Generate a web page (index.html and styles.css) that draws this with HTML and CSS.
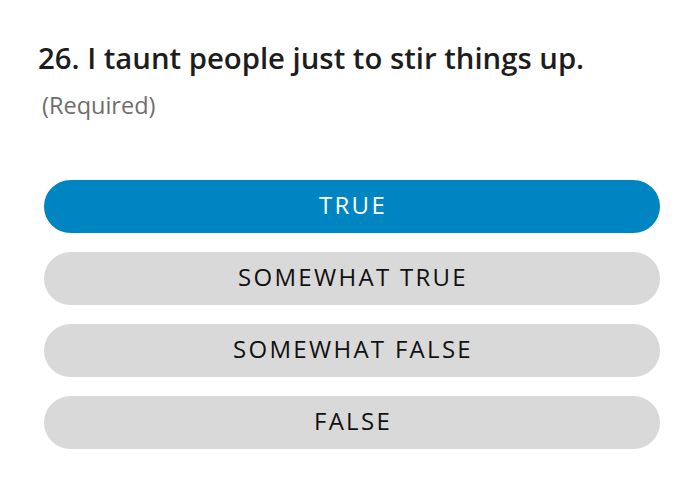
FILE: index.html
```html
<!DOCTYPE html>
<html>
<head>
<meta charset="utf-8">
<link rel="stylesheet" href="styles.css">
</head>
<body>
<div class="question">
  <h1 class="title">26. I taunt people just to stir things up.</h1>
  <div class="required">(Required)</div>
  <div class="options">
    <div class="option selected">TRUE</div>
    <div class="option">SOMEWHAT TRUE</div>
    <div class="option">SOMEWHAT FALSE</div>
    <div class="option">FALSE</div>
  </div>
</div>
</body>
</html>
```
FILE: styles.css
```css
html, body {
  margin: 0;
  padding: 0;
  background: #ffffff;
}
body {
  font-family: "Open Sans", "Noto Sans", sans-serif;
}
.question {
  padding: 38px 30px 0 38px;
}
.title {
  margin: 0;
  font-size: 29.3px;
  font-weight: 600;
  color: #1d1d1d;
  line-height: 40px;
}
.required {
  margin: 12px 0 0 4px;
  font-size: 23.5px;
  color: #6e6e6e;
  line-height: 30px;
}
.options {
  margin: 60px 0 0 6px;
  display: flex;
  flex-direction: column;
  gap: 19.5px;
}
.option {
  box-sizing: border-box;
  height: 52.5px;
  border-radius: 27px;
  background: #d9d9d9;
  color: #111111;
  display: flex;
  align-items: center;
  justify-content: center;
  font-size: 24px;
  letter-spacing: 2.3px;
  padding: 0 0 3px 2px;
}
.option.selected {
  background: #0085c3;
  color: #ffffff;
}
```
